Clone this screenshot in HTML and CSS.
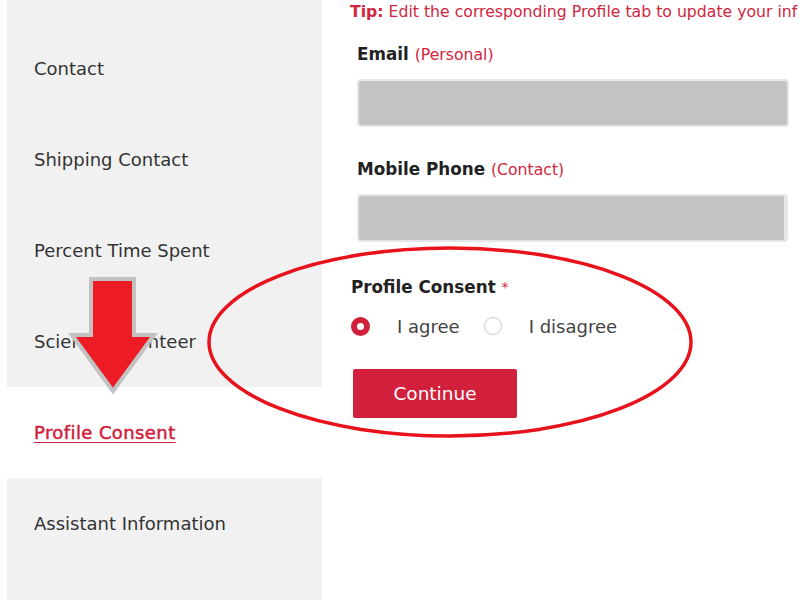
FILE: index.html
```html
<!DOCTYPE html>
<html lang="en">

<head>
    <meta charset="UTF-8">
    <meta name="viewport" content="width=device-width, initial-scale=1.0">
    <title>Profile Consent</title>
    <link rel="stylesheet" href="styles.css">
</head>

<body>
    <div class="page">
        <div class="sidebar">
            <div class="nav-item">Contact</div>
            <div class="nav-item">Shipping Contact</div>
            <div class="nav-item">Percent Time Spent</div>
            <div class="nav-item">Science Volunteer</div>
            <div class="nav-item active"><a href="#">Profile Consent</a></div>
            <div class="nav-item">Assistant Information</div>
        </div>

        <div class="main">
            <div class="tip"><b>Tip:</b> Edit the corresponding Profile tab to update your inf</div>

            <div class="field">
                <label class="field-label">Email <span class="hint">(Personal)</span></label>
                <div class="field-input"></div>
            </div>

            <div class="field second">
                <label class="field-label">Mobile Phone <span class="hint">(Contact)</span></label>
                <div class="field-input inset"></div>
            </div>

            <div class="consent">
                <div class="field-label">Profile Consent <span class="required">*</span></div>
                <div class="radio-row">
                    <span class="radio checked"></span>
                    <span class="radio-label">I agree</span>
                    <span class="radio"></span>
                    <span class="radio-label">I disagree</span>
                </div>
            </div>

            <button class="btn">Continue</button>
        </div>
    </div>

    <!-- annotation drawn over the screenshot -->
    <svg class="markup" width="800" height="600" viewBox="0 0 800 600">
        <ellipse cx="450" cy="342" rx="241" ry="94" fill="none" stroke="#e8121c" stroke-width="3.5" />
        <polygon points="91,279 134,279 134,335 154,335 113,391 72,335 91,335" fill="#ed1c24" stroke="#c2c2c2"
            stroke-width="4" stroke-linejoin="miter" />
    </svg>
</body>

</html>
```

FILE: styles.css
```css
body {
    font-family: "DejaVu Sans", "Noto Sans", sans-serif;
    background-color: white;
    margin: 0;
    width: 800px;
    height: 600px;
    overflow: hidden;
    position: relative;
}

.page {
    display: flex;
    height: 600px;
}

.sidebar {
    margin-left: 7px;
    width: 315px;
    flex-shrink: 0;
    background-color: #f1f1f1;
    padding-top: 23px;
    box-sizing: border-box;
}

.nav-item {
    height: 91px;
    display: flex;
    align-items: center;
    padding-left: 27px;
    font-size: 18px;
    color: #333;
}

.nav-item.active {
    background-color: white;
}

.nav-item.active a {
    color: #d0213a;
    -webkit-text-stroke: 0.5px #d0213a;
    letter-spacing: 0.4px;
    text-decoration: underline;
    text-underline-offset: 3px;
}

.main {
    flex: 1;
    padding-left: 28px;
    overflow: hidden;
}

.tip {
    white-space: nowrap;
    font-size: 15.7px;
    line-height: 20px;
    margin-top: 2px;
    color: #d0263e;
}

.field {
    margin-left: 7px;
    margin-top: 22px;
}

.field.second {
    margin-top: 32px;
}

.field-label {
    display: block;
    font-size: 16.8px;
    font-weight: bold;
    line-height: 20px;
    color: #222;
}

.hint {
    font-size: 15.7px;
    font-weight: normal;
    color: #d0263e;
}

.required {
    color: #d0263e;
    font-weight: normal;
    font-size: 14px;
    vertical-align: top;
}

.field-input {
    margin-top: 14px;
    width: 432px;
    height: 48px;
    box-sizing: border-box;
    background-color: #c3c3c3;
    border: 2px solid #e4e6e9;
    border-radius: 4px;
}

.field-input.inset {
    width: 431px;
    border-right-width: 4px;
}

.consent {
    margin-left: 1px;
    margin-top: 35px;
}

.radio-row {
    display: flex;
    align-items: center;
    margin-top: 19px;
    height: 20px;
    font-size: 18px;
    color: #444;
}

.radio {
    width: 18px;
    height: 18px;
    border-radius: 50%;
    border: 1px solid #c9c9c9;
    box-sizing: border-box;
    background-color: white;
}

.radio.checked {
    width: 19px;
    height: 19px;
    border: 6px solid #d0213a;
}

.radio-label {
    margin-left: 27px;
    margin-right: 24px;
}

.btn {
    margin-top: 33px;
    margin-left: 3px;
    width: 164px;
    height: 49px;
    font-family: inherit;
    font-size: 18.5px;
    color: white;
    background-color: #d21f3b;
    border: none;
    border-radius: 2px;
}

.markup {
    position: absolute;
    left: 0;
    top: 0;
    pointer-events: none;
}
```
